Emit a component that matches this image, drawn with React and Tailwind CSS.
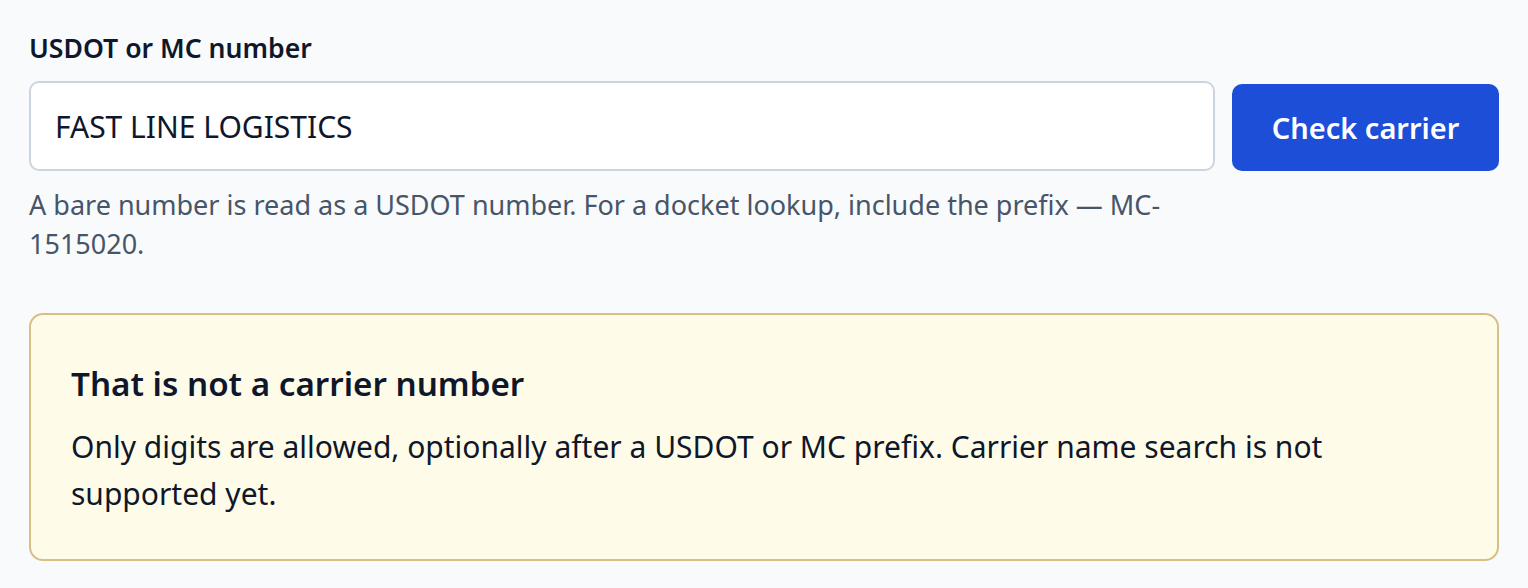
export default function App() {
  return (
    <div className="min-h-[588px] bg-[#f8fafc] px-[29px] pt-[30px] text-[#0f172a]" style={{ fontFamily: '"Noto Sans", "Open Sans", sans-serif' }}>
      <label className="block text-[26.6px] leading-[36px] font-semibold text-[#0f172a]">USDOT or MC number</label>
      <div className="mt-[15px] flex items-start gap-[17px]">
        <div className="flex flex-1 flex-col">
          <div className="flex h-[90px] items-center rounded-[10px] border-2 border-[#cbd5e1] bg-white px-[24px]">
            <span className="text-[30px] text-[#0f172a]">FAST LINE LOGISTICS</span>
          </div>
          <p className="mt-[14px] text-[27px] leading-[39px] text-[#475569]">
            A bare number is read as a USDOT number. For a docket lookup, include the prefix — MC-1515020.
          </p>
        </div>
        <button className="mt-[3px] h-[87px] w-[267px] shrink-0 rounded-[10px] bg-[#1d4ed8] text-[29px] font-semibold text-white">Check carrier</button>
      </div>
      <div className="mt-[50px] rounded-[14px] border-2 border-[#d8bf85] bg-[#fefce9] px-[40px] pt-[49px] pb-[42px]">
        <h2 className="text-[33.2px] leading-[40px] font-semibold text-[#0f172a]">That is not a carrier number</h2>
        <p className="mt-[19px] w-[1300px] text-[30px] leading-[47px] text-[#0f172a]">
          Only digits are allowed, optionally after a USDOT or MC prefix. Carrier name search is not supported yet.
        </p>
      </div>
    </div>
  );
}
